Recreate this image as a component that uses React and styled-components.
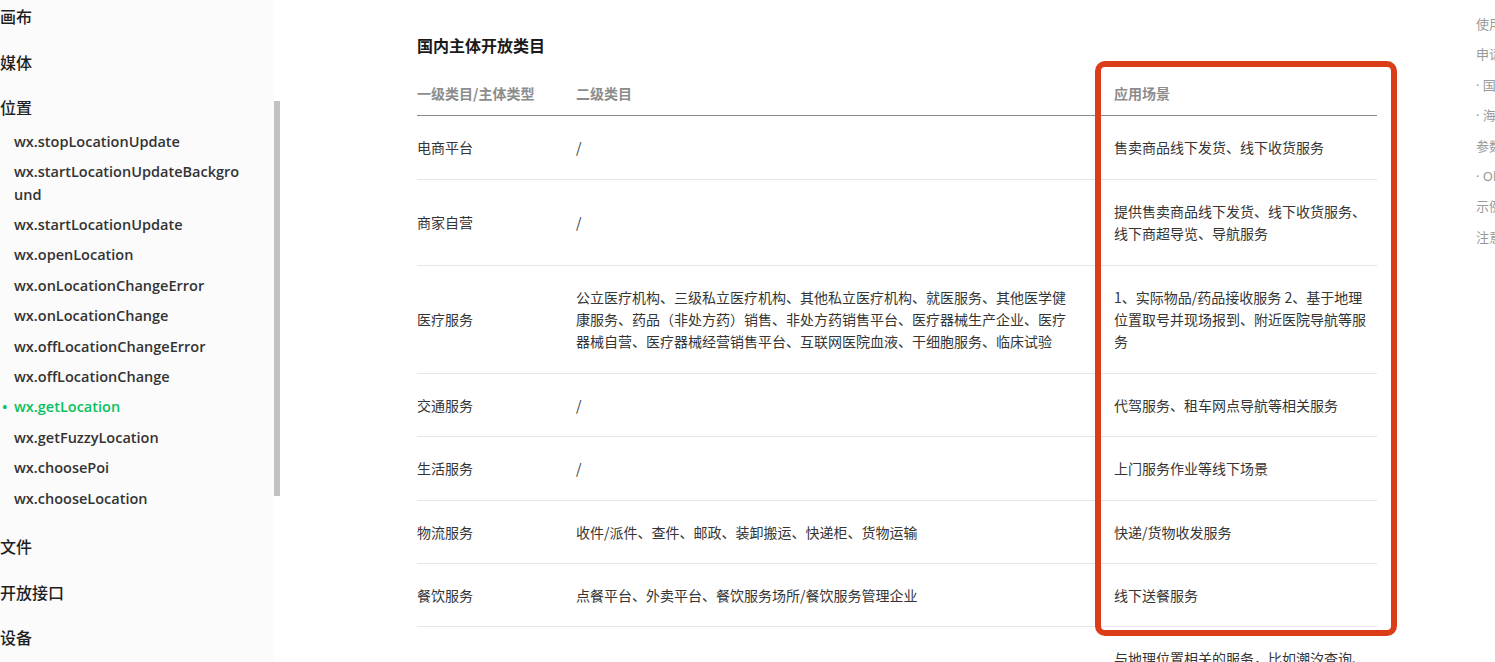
import React from 'react'
import styled, { createGlobalStyle } from 'styled-components'

const GlobalStyle = createGlobalStyle`
  html, body {
    margin: 0;
    padding: 0;
    background: #fff;
    overflow: hidden;
  }
  body {
    font-family: "Noto Sans CJK SC", "Noto Sans", sans-serif;
    color: #333;
  }
`

const Page = styled.div`
  display: flex;
  width: 100vw;
  height: 662px;
  overflow: hidden;
`

const Sidebar = styled.nav`
  position: relative;
  flex: 0 0 280px;
  height: 100%;
  overflow: hidden;
  background: linear-gradient(to right, #fbfbfb 274px, #fff 274px);
`

const ScrollThumb = styled.div`
  position: absolute;
  left: 274px;
  top: 101px;
  width: 6px;
  height: 395px;
  background: #c1c1c1;
`

const NavList = styled.ul`
  list-style: none;
  margin: -7px 0 0;
  padding: 0;
  width: 274px;
`

const Group = styled.li`
  margin: 0;
`

const GroupTitle = styled.div`
  font-family: "Noto Sans CJK SC", sans-serif;
  font-size: 16px;
  font-weight: 500;
  line-height: 24px;
  padding: 11px 0 10.6px;
  color: #1f1f1f;
`

const SubList = styled.ul`
  list-style: none;
  margin: -3px 0 9px;
  padding: 0;
`

const SubItem = styled.li`
  position: relative;
  font-family: "Open Sans", "Noto Sans CJK SC", sans-serif;
  font-size: 14.5px;
  font-weight: 600;
  line-height: 22.4px;
  padding: 4px 30px 4px 14px;
  word-break: break-all;
  color: ${p => (p.$active ? '#07c160' : '#333')};

  &::before {
    content: ${p => (p.$active ? "'•'" : 'none')};
    position: absolute;
    left: 2px;
    top: 4px;
  }
`

const Main = styled.main`
  flex: 0 0 auto;
  padding: 33px 0 0 137px;
  width: 960px;
`

const Title = styled.h2`
  margin: 0 0 13px;
  font-size: 16px;
  font-weight: 700;
  line-height: 24px;
  color: #1a1a1a;
`

const Table = styled.table`
  width: 960px;
  table-layout: fixed;
  border-collapse: collapse;
  font-size: 14px;
  line-height: 1.6;
`

const Th = styled.th`
  width: ${p => p.$w}px;
  text-align: left;
  font-weight: 700;
  color: #8c8c8c;
  padding: 12px ${p => p.$pr || 0}px 11px 0;
  border-bottom: 1px solid #888;
`

const Td = styled.td`
  vertical-align: middle;
  padding: 20px ${p => p.$pr || 0}px 20px 0;
  color: #353535;
  border-bottom: 1px solid #e6e6e6;
`

const Highlight = styled.div`
  position: absolute;
  left: 1095px;
  top: 61px;
  width: 290px;
  height: 563px;
  border: 6px solid #da3d17;
  border-radius: 10px;
  pointer-events: none;
`

const Toc = styled.aside`
  flex: 0 0 220px;
  margin-left: 99px;
  padding-top: 9px;
  font-family: "Noto Sans", "Noto Sans CJK SC", sans-serif;
  font-size: 13px;
  color: #999;
  white-space: nowrap;
`

const TocItem = styled.div`
  line-height: 22px;
  padding: 4px 0 4.4px;
`

const groupsTop = ['画布', '媒体']
const locationApis = [
  'wx.stopLocationUpdate',
  'wx.startLocationUpdateBackground',
  'wx.startLocationUpdate',
  'wx.openLocation',
  'wx.onLocationChangeError',
  'wx.onLocationChange',
  'wx.offLocationChangeError',
  'wx.offLocationChange',
  'wx.getLocation',
  'wx.getFuzzyLocation',
  'wx.choosePoi',
  'wx.chooseLocation',
]
const groupsBottom = ['文件', '开放接口', '设备', 'AI']

const rows = [
  ['电商平台', '/', '售卖商品线下发货、线下收货服务'],
  ['商家自营', '/', '提供售卖商品线下发货、线下收货服务、线下商超导览、导航服务'],
  [
    '医疗服务',
    '公立医疗机构、三级私立医疗机构、其他私立医疗机构、就医服务、其他医学健康服务、药品（非处方药）销售、非处方药销售平台、医疗器械生产企业、医疗器械自营、医疗器械经营销售平台、互联网医院血液、干细胞服务、临床试验',
    '1、实际物品/药品接收服务 2、基于地理位置取号并现场报到、附近医院导航等服务',
  ],
  ['交通服务', '/', '代驾服务、租车网点导航等相关服务'],
  ['生活服务', '/', '上门服务作业等线下场景'],
  ['物流服务', '收件/派件、查件、邮政、装卸搬运、快递柜、货物运输', '快递/货物收发服务'],
  ['餐饮服务', '点餐平台、外卖平台、餐饮服务场所/餐饮服务管理企业', '线下送餐服务'],
  ['工具服务', '天气、日历、万年历、潮汐服务', '与地理位置相关的服务，比如潮汐查询、天气查询、日历等工具类服务'],
]

const tocItems = ['使用限制', '申请开通', '· 国内主体开放类目', '· 海外主体开放类目', '参数', '· Object object', '示例代码', '注意事项']

export default function App() {
  return (
    <Page>
      <GlobalStyle />
      <Sidebar>
        <NavList>
          {groupsTop.map(g => (
            <Group key={g}><GroupTitle>{g}</GroupTitle></Group>
          ))}
          <Group>
            <GroupTitle>位置</GroupTitle>
            <SubList>
              {locationApis.map(api => (
                <SubItem key={api} $active={api === 'wx.getLocation'}>{api}</SubItem>
              ))}
            </SubList>
          </Group>
          {groupsBottom.map(g => (
            <Group key={g}><GroupTitle>{g}</GroupTitle></Group>
          ))}
        </NavList>
        <ScrollThumb />
      </Sidebar>

      <Main>
        <Title>国内主体开放类目</Title>
        <Table>
          <thead>
            <tr>
              <Th $w={143} $pr={16}>一级类目/主体类型</Th>
              <Th $w={500} $pr={38}>二级类目</Th>
              <Th $w={257} $pr={6}>应用场景</Th>
            </tr>
          </thead>
          <tbody>
            {rows.map(r => (
              <tr key={r[0]}>
                <Td $pr={16}>{r[0]}</Td>
                <Td $pr={38}>{r[1]}</Td>
                <Td $pr={6}>{r[2]}</Td>
              </tr>
            ))}
          </tbody>
        </Table>
      </Main>

      <Toc>
        {tocItems.map(t => (
          <TocItem key={t}>{t}</TocItem>
        ))}
      </Toc>

      <Highlight />
    </Page>
  )
}
